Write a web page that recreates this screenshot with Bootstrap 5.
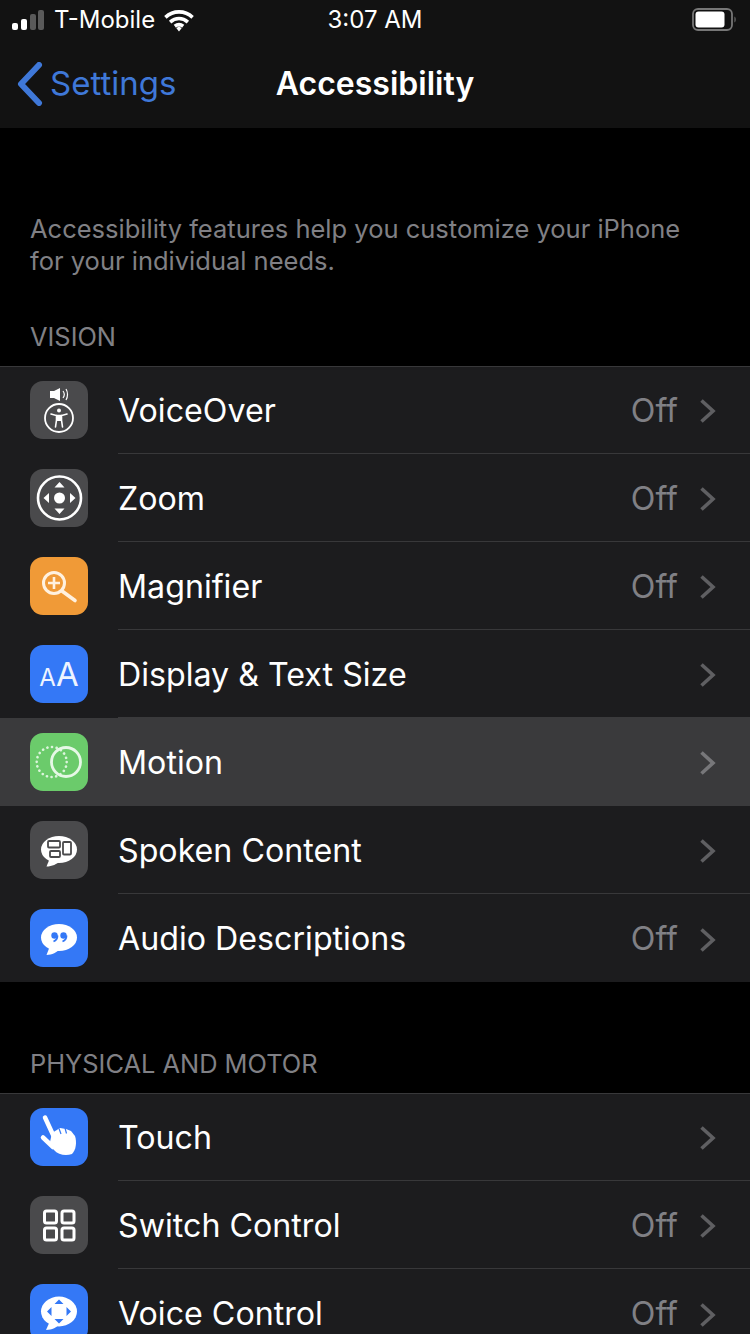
<!DOCTYPE html>
<html lang="en">
<head>
  <meta charset="UTF-8">
  <meta name="viewport" content="width=device-width, initial-scale=1.0">
  <title>Accessibility</title>
  <link href="https://cdn.jsdelivr.net/npm/bootstrap@5.3.0/dist/css/bootstrap.min.css" rel="stylesheet">

  <style>
    body {
      background: #000;
      color: #fff;
      font-family: Inter, "Liberation Sans", sans-serif;
      height: 1334px;
      overflow: hidden;
    }

    /* Top bars */
    .top-bars { background: #121212; height: 128px; }
    .status-line { height: 40px; font-size: 24px; padding: 0 12px; }
    .status-line > div, .nav-line > div { min-width: 0; }
    .three-col { display: grid; grid-template-columns: 1fr auto 1fr; }
    .carrier { margin-left: 7px; margin-right: 8px; }
    .nav-line { height: 88px; }
    .back-text { color: #3f78d8; font-size: 33px; margin-left: 6px; }
    .nav-title { font-size: 32px; font-weight: 600; }

    /* Section text */
    .intro-text {
      color: #808085;
      font-size: 25.5px;
      line-height: 32px;
      padding: 85px 30px 0;
      margin: 0;
    }
    .sect-label {
      color: #808085;
      font-size: 25.4px;
      line-height: 30px;
      padding: 0 30px;
    }
    .label-one { margin-top: 45px; margin-bottom: 14px; }
    .label-two { margin-top: 67px; margin-bottom: 14px; }

    /* Rows */
    .sett-item {
      background: #1c1c1e;
      height: 88px;
      padding: 0 0 0 30px;
      border: 0;
      border-radius: 0 !important;
      color: #fff;
      display: flex;
    }
    .sett-item:first-child { border-top: 1px solid #38383a; }
    .sett-item:first-child .app-icon { margin-top: -1px; }
    .sett-item:last-child { border-bottom: 1px solid #38383a; }
    .sett-item.is-active { background: #3a3a3c; }
    .sett-inner {
      margin-left: 30px;
      padding: 3px 34px 0 0;
      border-bottom: 1px solid #38383a;
      font-size: 32.2px;
    }
    .sett-item:first-child .sett-inner { padding-top: 2px; }
    .sett-item:last-child .sett-inner { border-bottom: 0; }
    .sett-item.is-active .sett-inner, .row-before-active .sett-inner { border-bottom-color: #3a3a3c; }
    .off-text { color: #808085; margin-right: 21px; }
    .row-chev { width: 17px; height: 26px; }
    .app-icon {
      width: 58px;
      height: 58px;
      border-radius: 13px;
      flex: none;
      align-self: center;
      position: relative;
    }
    .app-icon svg { display: block; }
    .ic-gray { background: #4a4a4c; }
    .ic-orange { background: #f09a37; }
    .ic-blue { background: #3478f6; }
    .ic-green { background: #6bcb6b; }
    .aa-text { color: #eef4ff; font-weight: 400; height: 58px; line-height: 58px; }
    .aa-small { font-size: 24px; }
    .aa-big { font-size: 33px; }
  </style>
</head>
<body>

  <!-- Status bar and navigation -->
  <div class="top-bars">
    <div class="status-line three-col align-items-center">
      <div class="d-flex align-items-center">
        <svg width="35" height="20" viewBox="0 0 35 20">
          <rect x="0" y="13" width="6" height="7" rx="2" fill="#fff"/>
          <rect x="9" y="9" width="6" height="11" rx="2" fill="#fff"/>
          <rect x="18" y="4" width="6" height="16" rx="2" fill="#5a5a5a"/>
          <rect x="26" y="0" width="6" height="20" rx="2" fill="#5a5a5a"/>
        </svg>
        <span class="carrier">T-Mobile</span>
        <svg width="32" height="23" viewBox="0 0 30 22">
          <path d="M2 8C9.500 1 20.500 1 28 8M6.500 12.500C11.500 8 18.500 8 23.500 12.500M11 16.500C13.500 14.500 16.500 14.500 19 16.500" fill="none" stroke="#fff" stroke-width="3.400"/>
          <path d="M12.500 18.500L15 16.500L17.500 18.500L15 21.500Z" fill="#fff"/>
        </svg>
      </div>
      <div>3:07 AM</div>
      <div class="d-flex justify-content-end align-items-center">
        <svg width="46" height="24" viewBox="0 0 46 24">
          <rect x="1" y="1" width="39" height="21" rx="5" fill="none" stroke="#777" stroke-width="1.800"/>
          <rect x="3.500" y="3.500" width="29" height="16" rx="3" fill="#fff"/>
          <path d="M42.500 8.500C44 9 44 14 42.500 14.500Z" fill="#777"/>
        </svg>
      </div>
    </div>
    <div class="nav-line three-col align-items-center">
      <div class="d-flex align-items-center ps-3">
        <svg width="28" height="44" viewBox="0 0 28 44">
          <path d="M23 3L5 22L23 41" fill="none" stroke="#3f78d8" stroke-width="6" stroke-linecap="round" stroke-linejoin="round"/>
        </svg>
        <span class="back-text">Settings</span>
      </div>
      <div class="nav-title">Accessibility</div>
      <div></div>
    </div>
  </div>

  <p class="intro-text">Accessibility features help you customize your iPhone<br>for your individual needs.</p>

  <!-- Vision -->
  <div class="sect-label label-one">VISION</div>
  <div class="list-group list-group-flush">
    <div class="list-group-item sett-item">
      <div class="app-icon ic-gray">
        <svg width="58" height="58" viewBox="0 0 58 58" fill="none">
          <path d="M20 10H24L30 7V20L24 17H20Z" fill="#fff"/>
          <path d="M33 10C34.500 12 34.500 15 33 17M36 8C38 11 38 16 36 19" stroke="#fff" stroke-width="1.200"/>
          <circle cx="29" cy="37" r="14" stroke="#fff" stroke-width="1.800"/>
          <circle cx="29" cy="29.500" r="2" fill="#fff"/>
          <path d="M21 33L26.500 34.500V39L25.500 46M37 33L31.500 34.500V39L32.500 46M26.500 34.500H31.500" stroke="#fff" stroke-width="1.600" stroke-linecap="round"/>
          <rect x="27" y="34" width="4" height="6" fill="#fff"/>
        </svg>
      </div>
      <div class="sett-inner d-flex align-items-center flex-grow-1">
        <span class="flex-grow-1">VoiceOver</span>
        <span class="off-text">Off</span>
        <svg class="row-chev" viewBox="0 0 17 26"><path d="M2.500 2.500L14 13L2.500 23.500" fill="none" stroke="#5f5f62" stroke-width="3.600"/></svg>
      </div>
    </div>
    <div class="list-group-item sett-item">
      <div class="app-icon ic-gray">
        <svg width="58" height="58" viewBox="0 0 58 58" fill="none">
          <circle cx="29.500" cy="29" r="21.500" stroke="#fff" stroke-width="2.600"/>
          <circle cx="29.500" cy="29" r="5.500" fill="#fff"/>
          <path d="M29.500 13L34.500 18.500H24.500ZM29.500 45L34.500 39.500H24.500ZM13.500 29L19 24V34ZM45.500 29L40 24V34Z" fill="#fff"/>
        </svg>
      </div>
      <div class="sett-inner d-flex align-items-center flex-grow-1">
        <span class="flex-grow-1">Zoom</span>
        <span class="off-text">Off</span>
        <svg class="row-chev" viewBox="0 0 17 26"><path d="M2.500 2.500L14 13L2.500 23.500" fill="none" stroke="#5f5f62" stroke-width="3.600"/></svg>
      </div>
    </div>
    <div class="list-group-item sett-item">
      <div class="app-icon ic-orange">
        <svg width="58" height="58" viewBox="0 0 58 58" fill="none">
          <circle cx="24" cy="26" r="10.500" stroke="#fff1df" stroke-width="3"/>
          <path d="M24 20V32M18 26H30" stroke="#fff1df" stroke-width="2.600"/>
          <path d="M32 34L45 43.500" stroke="#fff1df" stroke-width="3.600" stroke-linecap="round"/>
        </svg>
      </div>
      <div class="sett-inner d-flex align-items-center flex-grow-1">
        <span class="flex-grow-1">Magnifier</span>
        <span class="off-text">Off</span>
        <svg class="row-chev" viewBox="0 0 17 26"><path d="M2.500 2.500L14 13L2.500 23.500" fill="none" stroke="#5f5f62" stroke-width="3.600"/></svg>
      </div>
    </div>
    <div class="list-group-item sett-item row-before-active">
      <div class="app-icon ic-blue">
        <div class="aa-text d-flex align-items-baseline justify-content-center"><span class="aa-small">A</span><span class="aa-big">A</span></div>
      </div>
      <div class="sett-inner d-flex align-items-center flex-grow-1">
        <span class="flex-grow-1">Display &amp; Text Size</span>
        <svg class="row-chev" viewBox="0 0 17 26"><path d="M2.500 2.500L14 13L2.500 23.500" fill="none" stroke="#5f5f62" stroke-width="3.600"/></svg>
      </div>
    </div>
    <div class="list-group-item sett-item is-active">
      <div class="app-icon ic-green">
        <svg width="58" height="58" viewBox="0 0 58 58" fill="none">
          <circle cx="21.700" cy="29" r="15" stroke="#dcf5dc" stroke-width="2.600" stroke-dasharray="0.100 4.600" stroke-linecap="round"/>
          <circle cx="36" cy="29" r="14.500" stroke="#e6f8e6" stroke-width="2.800"/>
        </svg>
      </div>
      <div class="sett-inner d-flex align-items-center flex-grow-1">
        <span class="flex-grow-1">Motion</span>
        <svg class="row-chev" viewBox="0 0 17 26"><path d="M2.500 2.500L14 13L2.500 23.500" fill="none" stroke="#77777a" stroke-width="3.600"/></svg>
      </div>
    </div>
    <div class="list-group-item sett-item">
      <div class="app-icon ic-gray">
        <svg width="58" height="58" viewBox="0 0 58 58" fill="none">
          <ellipse cx="29" cy="28.500" rx="18" ry="13.500" fill="#fff"/>
          <path d="M20 37L16.500 45.500C22 45.500 27 43 30 40Z" fill="#fff"/>
          <rect x="18" y="20" width="12" height="6.500" rx="1" stroke="#4a4a4c" stroke-width="1.800"/>
          <rect x="20" y="30" width="10" height="6" rx="1" stroke="#4a4a4c" stroke-width="1.800"/>
          <rect x="33" y="21" width="8" height="12.500" rx="1" stroke="#4a4a4c" stroke-width="1.800"/>
        </svg>
      </div>
      <div class="sett-inner d-flex align-items-center flex-grow-1">
        <span class="flex-grow-1">Spoken Content</span>
        <svg class="row-chev" viewBox="0 0 17 26"><path d="M2.500 2.500L14 13L2.500 23.500" fill="none" stroke="#5f5f62" stroke-width="3.600"/></svg>
      </div>
    </div>
    <div class="list-group-item sett-item">
      <div class="app-icon ic-blue">
        <svg width="58" height="58" viewBox="0 0 58 58" fill="none">
          <ellipse cx="29" cy="28.500" rx="18" ry="13.500" fill="#fff"/>
          <path d="M20 37L16.500 46C22 46 27 43 30 40Z" fill="#fff"/>
          <circle cx="24.500" cy="26.500" r="3.200" fill="#3478f6"/>
          <circle cx="33.500" cy="26.500" r="3.200" fill="#3478f6"/>
          <path d="M27.500 26.500C27.500 29.500 26 31.500 23.500 32.500M36.500 26.500C36.500 29.500 35 31.500 32.500 32.500" stroke="#3478f6" stroke-width="1.800"/>
        </svg>
      </div>
      <div class="sett-inner d-flex align-items-center flex-grow-1">
        <span class="flex-grow-1">Audio Descriptions</span>
        <span class="off-text">Off</span>
        <svg class="row-chev" viewBox="0 0 17 26"><path d="M2.500 2.500L14 13L2.500 23.500" fill="none" stroke="#5f5f62" stroke-width="3.600"/></svg>
      </div>
    </div>
  </div>

  <!-- Physical and motor -->
  <div class="sect-label label-two">PHYSICAL AND MOTOR</div>
  <div class="list-group list-group-flush">
    <div class="list-group-item sett-item">
      <div class="app-icon ic-blue">
        <svg width="58" height="58" viewBox="0 0 58 58" fill="none">
          <path d="M15 9.500L24 29" stroke="#fff" stroke-width="4.500" stroke-linecap="round"/>
          <path d="M13 29.500L23 39" stroke="#fff" stroke-width="4.500" stroke-linecap="round"/>
          <path d="M22 25L30 20L36 21L41 23L45 28C47 34 46 42 42 46C36 48 28 47 24 42L20 34Z" fill="#fff"/>
          <path d="M29 20.500L31 26M35 20L36.500 25.500" stroke="#3478f6" stroke-width="1.200"/>
        </svg>
      </div>
      <div class="sett-inner d-flex align-items-center flex-grow-1">
        <span class="flex-grow-1">Touch</span>
        <svg class="row-chev" viewBox="0 0 17 26"><path d="M2.500 2.500L14 13L2.500 23.500" fill="none" stroke="#5f5f62" stroke-width="3.600"/></svg>
      </div>
    </div>
    <div class="list-group-item sett-item">
      <div class="app-icon ic-gray">
        <svg width="58" height="58" viewBox="0 0 58 58" fill="none" stroke="#fff" stroke-width="3">
          <rect x="14.500" y="15" width="12" height="12" rx="2"/>
          <rect x="32" y="15" width="12" height="12" rx="2"/>
          <rect x="14.500" y="32" width="12" height="12" rx="2"/>
          <rect x="32" y="32" width="12" height="12" rx="2"/>
        </svg>
      </div>
      <div class="sett-inner d-flex align-items-center flex-grow-1">
        <span class="flex-grow-1">Switch Control</span>
        <span class="off-text">Off</span>
        <svg class="row-chev" viewBox="0 0 17 26"><path d="M2.500 2.500L14 13L2.500 23.500" fill="none" stroke="#5f5f62" stroke-width="3.600"/></svg>
      </div>
    </div>
    <div class="list-group-item sett-item">
      <div class="app-icon ic-blue">
        <svg width="58" height="58" viewBox="0 0 58 58" fill="none">
          <ellipse cx="29" cy="27.500" rx="18" ry="15" fill="#fff"/>
          <path d="M20 37L16 46C22 46 27 43 30 40Z" fill="#fff"/>
          <path d="M29 15.500L33.500 20H24.500ZM29 39.500L33.500 35H24.500ZM17 27.500L21.500 23V32ZM41 27.500L36.500 23V32Z" fill="#3478f6"/>
        </svg>
      </div>
      <div class="sett-inner d-flex align-items-center flex-grow-1">
        <span class="flex-grow-1">Voice Control</span>
        <span class="off-text">Off</span>
        <svg class="row-chev" viewBox="0 0 17 26"><path d="M2.500 2.500L14 13L2.500 23.500" fill="none" stroke="#5f5f62" stroke-width="3.600"/></svg>
      </div>
    </div>
  </div>

  <script src="https://cdn.jsdelivr.net/npm/bootstrap@5.3.0/dist/js/bootstrap.bundle.min.js"></script>
</body>
</html>
